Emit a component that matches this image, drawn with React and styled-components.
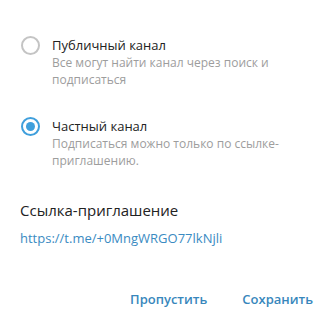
import React, { useState } from 'react';
import styled, { createGlobalStyle } from 'styled-components';

const GlobalStyle = createGlobalStyle`
  html, body {
    margin: 0;
    padding: 0;
    background: #ffffff;
  }
  body {
    font-family: "Open Sans", "Noto Sans", sans-serif;
    -webkit-font-smoothing: antialiased;
  }
`;

const Box = styled.div`
  width: 331px;
  height: 320px;
  box-sizing: border-box;
  padding-top: 35px;
  display: flex;
  flex-direction: column;
  background: #fff;
`;

const Options = styled.div`
  display: flex;
  flex-direction: column;
  gap: 28px;
  padding-left: 21px;
`;

const Option = styled.label`
  display: grid;
  grid-template-columns: 19px 1fr;
  column-gap: 12px;
  cursor: pointer;
`;

const Radio = styled.span`
  width: 19px;
  height: 19px;
  box-sizing: border-box;
  border-radius: 50%;
  border: 2px solid ${p => (p.checked ? '#3f9fdc' : '#c4c4c4')};
  margin-top: 1px;
  display: flex;
  align-items: center;
  justify-content: center;

  &::after {
    content: '';
    width: 9px;
    height: 9px;
    border-radius: 50%;
    background: #3f9fdc;
    display: ${p => (p.checked ? 'block' : 'none')};
  }
`;

const OptionText = styled.div`
  display: flex;
  flex-direction: column;
`;

const OptionTitle = styled.div`
  font-size: 13px;
  line-height: 20px;
  color: #222;
`;

const OptionDesc = styled.div`
  font-size: 12px;
  line-height: 16.5px;
  color: #9d9d9d;
  max-width: 250px;
`;

const Section = styled.div`
  margin-top: 31px;
  padding-left: 20px;
  display: flex;
  flex-direction: column;
  gap: 8px;
`;

const SectionTitle = styled.div`
  font-size: 15px;
  line-height: 20px;
  color: #222;
`;

const InviteLink = styled.a`
  font-size: 13px;
  line-height: 20px;
  color: #3a8bc2;
  text-decoration: none;
`;

const Footer = styled.div`
  margin-top: 41px;
  display: flex;
  justify-content: flex-end;
  gap: 35px;
  padding-right: 18px;
`;

const FlatButton = styled.button`
  border: none;
  background: none;
  padding: 0;
  font-family: inherit;
  font-size: 13px;
  font-weight: 600;
  line-height: 20px;
  color: #3887bc;
  cursor: pointer;
`;

export default function App() {
  const [type, setType] = useState('private');

  return (
    <>
      <GlobalStyle />
      <Box>
        <Options>
          <Option onClick={() => setType('public')}>
            <Radio checked={type === 'public'} />
            <OptionText>
              <OptionTitle>Публичный канал</OptionTitle>
              <OptionDesc>Все могут найти канал через поиск и подписаться</OptionDesc>
            </OptionText>
          </Option>
          <Option onClick={() => setType('private')}>
            <Radio checked={type === 'private'} />
            <OptionText>
              <OptionTitle>Частный канал</OptionTitle>
              <OptionDesc>Подписаться можно только по ссылке-приглашению.</OptionDesc>
            </OptionText>
          </Option>
        </Options>

        <Section>
          <SectionTitle>Ссылка-приглашение</SectionTitle>
          <InviteLink href="#">https://t.me/+0MngWRGO77lkNjli</InviteLink>
        </Section>

        <Footer>
          <FlatButton>Пропустить</FlatButton>
          <FlatButton>Сохранить</FlatButton>
        </Footer>
      </Box>
    </>
  );
}
